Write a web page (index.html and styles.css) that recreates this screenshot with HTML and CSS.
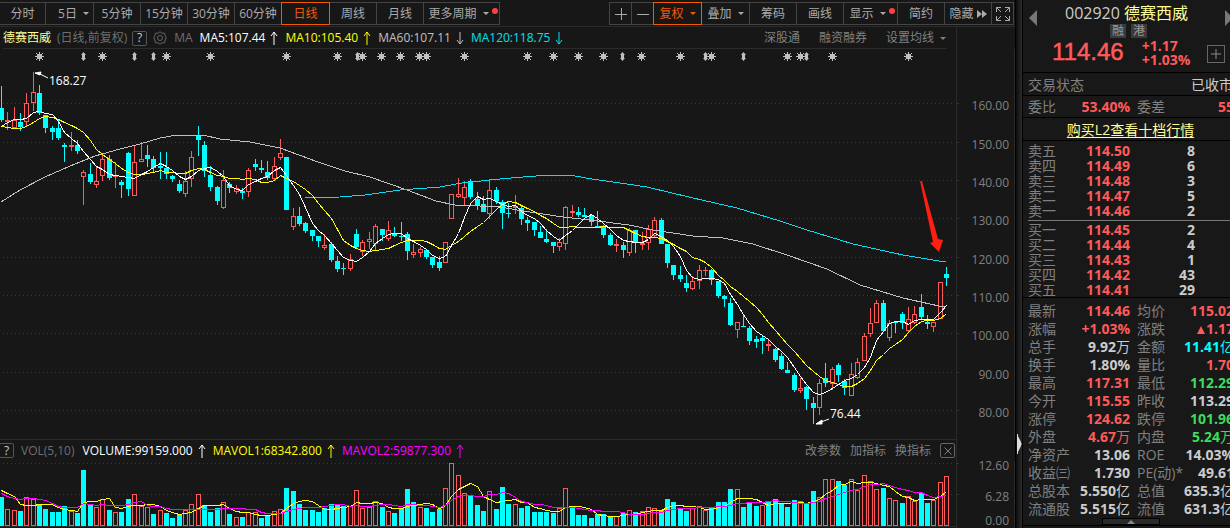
FILE: index.html
```html
<!DOCTYPE html>
<html lang="zh-CN">
<head>
<meta charset="utf-8">
<title>德赛西威 002920</title>
<link rel="stylesheet" href="styles.css">
</head>
<body>
<div class="app">
  <main class="main">
    <nav class="toolbar">
      <div class="group">
        <button class="tab tab-first">分时</button>
        <button class="tab tab-days">5日<i class="caret"></i></button>
        <button class="tab">5分钟</button>
        <button class="tab">15分钟</button>
        <button class="tab">30分钟</button>
        <button class="tab">60分钟</button>
        <button class="tab active">日线</button>
        <button class="tab">周线</button>
        <button class="tab">月线</button>
        <button class="tab tab-more">更多周期<i class="caret"></i><i class="dot"></i></button>
      </div>
      <div class="group group-right">
        <button class="tab tab-icon" aria-label="放大"><svg width="12" height="12"><path d="M0 6.5H12M6.5 0V12"/></svg></button>
        <button class="tab tab-icon" aria-label="缩小"><svg width="12" height="12"><path d="M0 6.5H12"/></svg></button>
        <button class="tab active">复权<i class="caret"></i></button>
        <button class="tab tab-overlay">叠加<i class="caret"></i></button>
        <button class="tab">筹码</button>
        <button class="tab">画线</button>
        <button class="tab tab-show">显示<i class="caret"></i><i class="dot"></i></button>
        <button class="tab">简约</button>
        <button class="tab tab-hide">隐藏<svg width="10" height="8"><path class="solid" d="M0 0L5 4L0 8ZM5 0L10 4L5 8Z"/></svg></button>
        <button class="tab tab-icon" aria-label="全屏"><svg width="14" height="14"><path d="M.5 5V.5H5M.5 .5L5 5M9 .5H13.5V5M13.5 .5L9 5M.5 9V13.5H5M.5 13.5L5 9M9 13.5H13.5V9M13.5 13.5L9 9"/></svg></button>
      </div>
    </nav>

    <div class="info info-top">
      <span class="name">德赛西威</span>
      <span class="dim note">(日线,前复权)</span>
      <button class="help">?</button>
      <svg class="gear" width="14" height="14"><path d="M7 .7L9 2.3L11.6 2.2L12.1 4.9L13.4 7L12.1 9.1L11.6 11.8L9 11.7L7 13.3L5 11.7L2.4 11.8L1.9 9.1L.6 7L1.9 4.9L2.4 2.2L5 2.3Z"/><circle cx="7" cy="7" r="2.5"/></svg>
      <span class="dim label-ma">MA</span>
      <span class="ind white">MA5:107.44<svg width="8" height="14"><path d="M4 1V14M1 5L4 1L7 5"/></svg></span>
      <span class="ind yellow">MA10:105.40<svg width="8" height="14"><path d="M4 1V14M1 5L4 1L7 5"/></svg></span>
      <span class="ind silver">MA60:107.11<svg width="8" height="14"><path d="M4 1V13M1 9L4 13L7 9"/></svg></span>
      <span class="ind aqua">MA120:118.75<svg width="8" height="14"><path d="M4 1V13M1 9L4 13L7 9"/></svg></span>
      <div class="links links-top">
        <button>深股通</button><button>融资融券</button><button>设置均线<i class="caret"></i></button>
      </div>
    </div>

    <svg class="chart" id="price" viewBox="0 49 1015 390" role="img" aria-label="日K线"></svg>

    <div class="info info-vol">
      <button class="help">?</button>
      <span class="dim label-vol">VOL(5,10)</span>
      <span class="ind white">VOLUME:99159.000<svg width="8" height="14"><path d="M4 1V14M1 5L4 1L7 5"/></svg></span>
      <span class="ind yellow">MAVOL1:68342.800<svg width="8" height="14"><path d="M4 1V14M1 5L4 1L7 5"/></svg></span>
      <span class="ind magenta">MAVOL2:59877.300<svg width="8" height="14"><path d="M4 1V14M1 5L4 1L7 5"/></svg></span>
      <div class="links links-vol">
        <button>改参数</button><button>加指标</button><button>换指标</button>
        <button class="close" aria-label="关闭"><svg width="8" height="8"><path d="M.5 .5L7.5 7.5M7.5 .5L.5 7.5"/></svg></button>
      </div>
    </div>

    <svg class="chart" id="volume" viewBox="0 461 1015 67" role="img" aria-label="成交量"></svg>
  </main>

  <div class="splitter"><svg width="5" height="20"><path d="M0 0H1V2L4 8V9L5 10L4 11V12L1 18V20H0Z"/></svg></div>

  <aside class="panel">
    <header class="quote">
      <button class="prev" aria-label="上一只"><svg width="8" height="16"><path d="M8 0V16L0 8Z"/></svg></button>
      <div class="quote-body">
        <h1><span class="code">002920</span> 德赛西威</h1>
        <div class="tags"><span>融</span><span>港</span></div>
        <div class="price-row">
          <span class="price">114.46</span>
          <div class="change"><div>+1.17</div><div>+1.03%</div></div>
        </div>
      </div>
      <div class="quote-side">
        <button class="next" aria-label="下一只"><svg width="8" height="16"><path d="M0 0V16L8 8Z"/></svg></button>
        <button class="add" aria-label="加自选"><svg width="10" height="10"><path d="M0 5H10M5 0V10"/></svg></button>
      </div>
    </header>
    <div class="line state"><span>交易状态</span><span class="closed">已收市</span></div>
    <table class="grid ratio"><tr><th>委比</th><td class="up">53.40%</td><th>委差</th><td class="up">55</td></tr></table>
    <div class="line l2"><a href="#">购买L2查看十档行情</a></div>
    <table class="book">
      <tr><th>卖五</th><td>114.50</td><td>8</td></tr>
      <tr><th>卖四</th><td>114.49</td><td>6</td></tr>
      <tr><th>卖三</th><td>114.48</td><td>3</td></tr>
      <tr><th>卖二</th><td>114.47</td><td>5</td></tr>
      <tr><th>卖一</th><td>114.46</td><td>2</td></tr>
    </table>
    <table class="book bids">
      <tr><th>买一</th><td>114.45</td><td>2</td></tr>
      <tr><th>买二</th><td>114.44</td><td>4</td></tr>
      <tr><th>买三</th><td>114.43</td><td>1</td></tr>
      <tr><th>买四</th><td>114.42</td><td>43</td></tr>
      <tr><th>买五</th><td>114.41</td><td>29</td></tr>
    </table>
    <table class="grid stats">
      <tr><th>最新</th><td class="up">114.46</td><th>均价</th><td class="up">115.02</td></tr>
      <tr><th>涨幅</th><td class="up">+1.03%</td><th>涨跌</th><td class="up"><svg width="8" height="8"><path d="M0 8L4 0L8 8Z"/></svg>1.17</td></tr>
      <tr><th>总手</th><td>9.92<span>万</span></td><th>金额</th><td class="cyan">11.41<span>亿</span></td></tr>
      <tr><th>换手</th><td>1.80%</td><th>量比</th><td class="up">1.70</td></tr>
      <tr><th>最高</th><td class="up">117.31</td><th>最低</th><td class="down">112.29</td></tr>
      <tr><th>今开</th><td class="up">115.55</td><th>昨收</th><td>113.29</td></tr>
      <tr><th>涨停</th><td class="up">124.62</td><th>跌停</th><td class="down">101.96</td></tr>
      <tr><th>外盘</th><td class="up">4.67<span>万</span></td><th>内盘</th><td class="down">5.24<span>万</span></td></tr>
      <tr><th>净资产</th><td>13.06</td><th>ROE</th><td>14.03%</td></tr>
      <tr><th>收益㈢</th><td>1.730</td><th>PE(动)*</th><td>49.61</td></tr>
      <tr><th>总股本</th><td>5.550<span>亿</span></td><th>总值</th><td>635.3<span>亿</span></td></tr>
      <tr><th>流通股</th><td>5.515<span>亿</span></td><th>流值</th><td>631.3<span>亿</span></td></tr>
    </table>
    <div class="foot"><button aria-label="展开"><svg width="8" height="4"><path d="M0 4L4 0L8 4Z"/></svg></button></div>
  </aside>
</div>
<script src="chart.js"></script>
</body>
</html>
```
FILE: chart.js
```js
// Each candle: direction (u/d), high, body top, body bottom, low, volume bar top, optional volume colour.
const data = `d 86 108 120 122 497|u 112 120 122 130 509|u 107 120 128 128 510|d 113 122 127 131 511|u 93 103 122 126 497
u 72 92 103 111 499|d 85 93 113 115 504|d 115 115 128 133 509|d 126 128 132 140 512|d 119 128 138 140 512
d 143 145 147 162 506|u 132 145 147 151 511|d 140 145 151 154 513|u 170 172 177 205 470 d|d 163 174 182 184 505
u 167 181 185 188 507|u 154 159 176 181 499|d 155 159 178 180 510|u 162 176 177 188 512|d 180 182 185 198 512
d 152 153 189 196 499|u 146 162 196 196 494|u 142 159 162 162 506|d 145 155 159 167 507 u|d 156 159 168 172 514
d 152 166 168 179 510 u|d 152 168 174 179 513|d 175 176 179 182 518|d 180 184 191 193 514|u 171 181 194 197 510
u 151 157 179 187 504|d 126 136 140 156 494 u|d 141 145 171 177 505|d 166 175 187 191 512|d 186 187 201 205 508
u 170 180 208 209 502|d 182 184 188 193 514|u 185 188 192 194 517|d 188 191 193 199 517|u 168 170 192 197 512
d 159 164 167 171 512 u|d 160 168 170 173 518|d 161 172 178 180 516|u 157 166 179 180 511|u 139 153 158 160 509
d 157 157 210 210 488|u 208 216 227 230 491 d|d 207 216 224 226 504|d 222 223 231 233 510|d 230 230 236 241 510
d 236 236 241 247 512|u 234 245 248 250 508 d|d 242 244 260 262 504|d 256 261 269 272 504|d 263 268 269 275 506
u 254 259 269 271 506|d 229 234 247 248 490 u|u 240 242 252 256 508|u 232 239 242 249 507|u 224 226 244 250 501
d 229 229 235 241 507|u 221 230 239 241 511|d 227 233 236 237 513|d 222 236 237 241 508|d 232 234 251 260 489
u 244 252 255 258 502 d|u 247 249 253 257 507|d 250 250 257 259 508|d 257 257 265 268 512|d 256 262 268 271 509
u 242 242 263 263 488|u 194 194 219 219 463|u 178 194 197 198 475|u 181 187 198 205 493|d 179 181 197 199 495
d 192 199 206 210 505|d 196 204 212 212 511|u 179 190 214 219 491|d 187 190 201 204 509|d 200 202 213 229 487
d 203 213 214 218 504|u 195 206 208 214 504|d 206 208 219 225 508|d 217 220 223 231 506|d 222 222 230 236 512
d 226 232 238 238 512|d 229 239 242 243 512|d 242 242 246 253 513|u 238 242 247 251 508|u 206 207 244 250 488
u 205 211 213 217 508 d|d 207 212 215 217 515|d 208 215 217 217 515|d 214 215 222 226 518|d 211 226 227 227 514
d 225 227 235 238 514|d 233 235 245 246 517|u 239 244 246 252 516|d 242 245 250 258 513|u 228 230 253 256 510
d 230 230 243 253 512|u 232 243 245 250 511|u 225 229 243 250 507|u 217 220 236 238 508|d 218 220 244 244 510
d 244 244 263 268 499|d 265 265 275 280 502|d 266 275 279 282 508|d 275 283 288 292 511|u 276 281 289 290 508
u 265 270 281 289 506|u 267 270 271 276 510|d 269 270 280 285 508|d 281 281 296 298 502|d 295 296 299 307 502
d 298 303 325 326 489|u 322 322 330 338 489|d 315 326 327 327 507|d 326 328 341 345 503|d 336 339 342 348 506
d 335 338 341 354 505 u|u 340 344 346 351 502 d|d 348 349 360 362 499|d 353 356 369 370 504|d 362 370 373 373 507
d 373 375 390 392 500|u 378 388 391 393 501|d 386 387 399 410 504|d 397 403 408 424 491|u 379 383 408 415 497
d 363 378 383 387 479 u|u 367 369 384 390 479|d 363 365 375 382 481|d 379 381 388 395 485|u 363 374 396 396 479
u 358 362 378 379 490|u 333 336 361 361 475|u 308 323 334 337 481|u 300 303 323 323 489|d 300 303 331 331 488
u 320 323 338 341 498|d 321 322 323 333 500 u|d 312 314 323 329 503|u 307 319 331 333 496|u 306 314 323 324 501
d 294 307 317 319 493|d 315 322 324 329 503|u 322 322 327 332 500|u 282 282 319 319 482|d 267 274 278 286 476 u`
  .split(/[|\n]/).map(r => {
    const [dir, high, top, bottom, low, vol, volDir] = r.trim().split(" ");
    return { dir, high: +high, top: +top, bottom: +bottom, low: +low, vol: +vol, volDir: volDir || dir };
  });

const STEP = 6.342, BASE = 526;
const xAt = i => Math.floor(1.5 + i * STEP);

const line = (cls, pts) => `<polyline class="${cls}" points="${pts.map(p => p.join()).join(" ")}"/>`;
const text = (cls, x, y, s) => `<text class="${cls}" x="${x}" y="${y}">${s}</text>`;

// Moving average, preceded by the values that depend on days before the first candle.
function average(values, n, lead) {
  return values.map((v, i) => {
    const y = i < lead.length ? lead[i] : values.slice(i - n + 1, i + 1).reduce((a, b) => a + b) / n;
    return [xAt(i) + 0.5, Math.round(y) + 0.5];
  });
}

const gridRow = y => `<path class="dots" d="M3 ${y}.5H954"/><path class="tick" d="M956 ${y}.5H959"/>`;

function candle(c, i) {
  const x = xAt(i), h = c.bottom - c.top;
  const wick = `M${x + 0.5} ${c.high}V${c.top}M${x + 0.5} ${c.bottom}V${c.low}`;
  const body = c.dir === "u" && h > 2
    ? `<rect class="hollow" x="${x - 1.5}" y="${c.top + 0.5}" width="4" height="${h - 1}"/>`
    : `<rect class="fill" x="${x - 2}" y="${c.top}" width="5" height="${h}"/>`;
  return `<g class="${c.dir}"><path d="${wick}"/>${body}</g>`;
}

function bar(c, i) {
  const x = xAt(i), h = BASE - c.vol;
  return `<g class="${c.volDir}">` + (c.volDir === "u"
    ? `<rect class="hollow" x="${x - 1.5}" y="${c.vol + 0.5}" width="4" height="${h - 1}"/>`
    : `<rect class="fill" x="${x - 2}" y="${c.vol}" width="5" height="${h}"/>`) + "</g>";
}

const star = x => `<path class="mark" d="M${x - 2} 54h5v5h-5z"/><path class="ray" d="M${x + 0.5} 52V61M${x - 4} 56.5H${x + 5}M${x - 3} 53L${x + 4} 60M${x + 4} 53L${x - 3} 60"/>`;
const updown = x => `<path class="mark" d="M${x + 0.5} 52L${x + 3} 55H${x + 2}V58H${x + 3}L${x + 0.5} 61L${x - 2} 58H${x - 1}V55H${x - 2}Z"/>`;

const stars = [39, 102, 166, 210, 286, 337, 362, 381, 400, 419, 426, 464, 527, 553, 578, 603, 641, 680, 711, 787, 800, 832, 908];
const arrows = [83, 134, 153, 357, 622, 705, 743, 806];

const ma60 = [[1,202],[20,190],[45,177],[70,166],[95,156],[120,149],[140,144],[160,138],[177,135],[203,135],[220,139],[250,142],[280,148],[318,162],[345,171],[370,177],[407,190],[436,201],[455,205],[480,206],[500,207],[523,211],[563,217],[590,220],[629,225],[653,230],[693,236],[723,238],[753,244],[787,255],[827,269],[860,285],[903,298],[939,306],[946,307]];
const ma120 = [[305,198],[340,197],[365,195],[400,190],[440,187],[462,183],[500,179],[523,177],[550,175],[575,176],[592,179],[620,183],[647,187],[693,198],[737,208],[780,221],[807,230],[853,244],[903,255],[939,261],[946,261]];

const closes = data.map(c => c.dir === "u" ? c.top : c.bottom);
const vols = data.map(c => c.vol);
const rows = [[103,160],[142,150],[180,140],[218,130],[257,120],[295,110],[333,100],[372,90],[410,80]];

document.getElementById("price").innerHTML =
  `<path class="frame" d="M956.5 49V439M1014.5 49V439"/>` +
  rows.map(([y, v]) => gridRow(y) + text("axis", 1009, y + 7, v.toFixed(2))).join("") +
  stars.map(star).join("") + arrows.map(updown).join("") +
  data.map(candle).join("") +
  line("avg silver", ma60) + line("avg aqua", ma120) +
  line("avg yellow", average(closes, 10, [126, 127, 128, 128, 126, 122, 118, 116, 117])) +
  line("avg white", average(closes, 5, [126, 122, 119, 119])) +
  `<path class="pointer" d="M35 73L41 72L40 75ZM40 74L48 78M816 424L822 420L822 424ZM821 422L829 419"/>` +
  text("callout", 49, 85, "168.27") + text("callout", 830, 418, "76.44") +
  `<path class="arrow" d="M920 181H922L938 239L943 240L939 252L930 243L933 242Z"/>`;

document.getElementById("volume").innerHTML =
  `<path class="frame" d="M956.5 461V528M1014.5 461V528M0 526.5H957"/>` +
  gridRow(463) + gridRow(494) +
  text("axis", 1009, 470, "12.60") + text("axis", 1009, 501, "6.28") + text("axis", 1009, 525, "0.00") +
  data.map(bar).join("") +
  line("avg yellow", average(vols, 5, [490, 493, 496, 504])) +
  line("avg magenta", average(vols, 10, [493, 496, 498, 499, 498, 498, 499, 500, 503]));
```
FILE: styles.css
```css
* { box-sizing: border-box; }
body {
  margin: 0;
  background: #0c0c0c;
  color: #999;
  font: 12px/16px "Open Sans", "Noto Sans CJK SC", sans-serif;
  overflow: hidden;
}
button {
  padding: 0;
  border: 0;
  background: none;
  color: inherit;
  font: inherit;
  white-space: nowrap;
}
svg { fill: none; stroke: currentColor; flex: none; }
i { font-style: normal; }

.app { display: flex; min-height: 100vh; overflow: hidden; }
.main { flex: 1; min-width: 0; background: #171717; }

.toolbar {
  display: flex;
  justify-content: space-between;
  height: 27px;
  padding: 2px 1px 0 0;
  border-bottom: 1px solid #2a2a2a;
}
.group { display: flex; height: 23px; }
.tab {
  display: flex;
  align-items: center;
  justify-content: center;
  width: 47px;
  border: 1px solid #444;
  border-left: 0;
  color: #aaa;
}
.tab-first { width: 46px; }
.tab-days { width: 48px; padding-left: 8px; }
.tab-overlay { width: 48px; }
.tab-more { width: 76px; }
.tab-icon { width: 22px; }
.tab-show { width: 54px; }
.group-right { border-left: 1px solid #444; }
.tab.active { width: 49px; margin-left: -1px; border: 1px solid #f25a05; color: #f25a05; }
.caret {
  margin-left: 6px;
  border: 3px solid transparent;
  border-top-color: currentColor;
  border-bottom: 0;
}
.dot { width: 6px; height: 6px; margin: -6px -3px 0 3px; border-radius: 3px; background: #ff4040; }
.tab-hide svg { margin-left: 3px; }
.solid { fill: currentColor; stroke: none; }

.info { display: flex; align-items: center; height: 22px; margin-right: 58px; border-right: 1px solid #2a2a2a; white-space: nowrap; }
.info-top { padding: 0 10px 0 3px; background: linear-gradient(#2a2a2a, #2a2a2a) 3px 100% / calc(100% - 12px) 1px no-repeat; }
.info-vol { padding-right: 1px; border-top: 1px solid #2a2a2a; }
.name { color: #ffff99; }
.note { margin-left: 6px; }
.dim { color: #6f6f6f; }
.help {
  width: 15px;
  height: 15px;
  margin-left: 5px;
  border: 1px solid #555;
  border-radius: 2px;
  color: #ccc;
  line-height: 12px;
}
.info-vol .help { margin-left: -1px; }
.gear { margin-left: 6px; color: #666; }
.label-ma { margin: 0 7px; }
.label-vol { margin: 0 8px 0 7px; }
.ind { display: flex; align-items: center; margin-right: 7px; }
.ind svg { margin-left: 5px; }
.white { color: #fff; }
.yellow { color: #ff0; }
.silver { color: #c0c0c0; }
.aqua { color: #00e0f0; }
.magenta { color: #f0f; }
.links { display: flex; align-items: center; margin-left: auto; color: #808080; }
.links button { display: flex; align-items: center; }
.links-top { gap: 19px; }
.links-vol { gap: 9px; }
.links .close { justify-content: center; width: 15px; height: 15px; border: 1px solid #666; border-radius: 2px; }

.chart { display: block; width: 100%; height: auto; overflow: visible; }
.frame { stroke: #2a2a2a; }
.tick { stroke: #333; }
.dots { stroke: #383838; stroke-dasharray: 1 3; }
.axis { fill: #808080; stroke: none; text-anchor: end; font-size: 12px; }
.callout { fill: #fff; stroke: none; font-size: 12px; }
.u { color: #ff5a5a; }
.d { color: #0ff; }
.fill { fill: currentColor; stroke: none; }
.hollow { fill: #171717; }
.u, .d, .avg { shape-rendering: crispEdges; }
.mark { fill: #c0c0c0; stroke: none; }
.ray { stroke: #c0c0c0; }
.pointer { fill: #fff; stroke: #fff; }
.arrow { fill: #ff1e10; stroke: none; }

.splitter {
  display: flex;
  align-items: flex-end;
  width: 8px;
  padding: 0 0 74px 1px;
  border-right: 1px solid #000;
  border-left: 1px solid #000;
  background: linear-gradient(90deg, #0c0c0c, #2c2c2c);
}
.splitter svg { fill: #ddd; stroke: none; }

.panel { width: 207px; flex: none; overflow: hidden; background: #181818; font-size: 14px; color: #808080; }
.quote { display: flex; height: 73px; padding: 3px 5px 0 6px; border-bottom: 1px solid #000; }
.prev, .next { display: flex; color: #777; height: 16px; margin-top: 7px; }
.prev svg, .next svg { fill: currentColor; stroke: none; }
.quote-body { flex: none; width: 164px; }
h1 { margin: 0 0 0 28px; color: #ffff99; font-size: 16px; font-weight: 400; line-height: 20px; white-space: nowrap; }
.code { color: #ccc; }
.tags { display: flex; gap: 5px; margin: 1px 0 0 73px; }
.tags span { width: 16px; height: 14px; background: #3a3a3a; color: #999; font-size: 12px; line-height: 14px; text-align: center; }
.price-row { display: flex; gap: 18px; margin-left: 15px; color: #ff5a5a; }
.price { font: 24px/28px "Liberation Sans", sans-serif; -webkit-text-stroke: 0.5px #ff5a5a; }
.change { padding-top: 1px; font-size: 14px; font-weight: 700; line-height: 14px; }
.quote-side { display: flex; flex-direction: column; flex: none; width: 28px; margin-left: 6px; }
.next { margin-left: 18px; }
.add { display: flex; align-items: center; justify-content: center; width: 18px; height: 18px; margin-top: 19px; border: 1px solid #666; color: #888; }
.line { display: flex; height: 23px; align-items: center; border-bottom: 1px solid #000; white-space: nowrap; }
.state { width: 210px; padding: 2px 0 0 5px; justify-content: space-between; }
.closed { color: #ccc; }
.l2 { width: 215px; padding-top: 1px; justify-content: center; }
.l2 a { color: #ffff99; text-underline-offset: 2px; }

table { border-spacing: 0; table-layout: fixed; }
th { padding: 0; text-align: left; font-weight: 400; white-space: nowrap; }
td { padding: 0; text-align: right; font-weight: 700; color: #ccc; white-space: nowrap; }
td span { font-weight: 400; }
td svg { margin-right: 1px; fill: currentColor; stroke: none; }
.grid { width: 211px; }
.grid th { width: 48px; padding-left: 5px; }
.grid td { width: 59px; }
.grid th:nth-child(3) { width: 50px; padding-left: 7px; }
.grid td:nth-child(4) { width: 54px; }
.ratio { height: 22px; border-bottom: 1px solid #000; }
.book { width: 202px; margin: 2px 0 0 5px; }
.book th { width: 42px; }
.book tr { height: 15px; line-height: 15px; }
.book td:nth-child(2) { width: 60px; color: #ff5a5a; }
.book td:nth-child(3) { padding-right: 35px; }
.bids { padding-top: 1px; border-top: 1px solid #777; }
.stats { padding-top: 4px; border-top: 1px solid #000; }
.stats tr { height: 18px; line-height: 18px; }
td.up, .up { color: #ff5a5a; }
td.down { color: #3ddc5c; }
td.cyan { color: #0ff; }
.foot { display: flex; justify-content: center; width: 215px; border-bottom: 1px solid #000; }
.foot button { display: flex; align-items: center; justify-content: center; width: 58px; height: 7px; border: 1px solid #000; background: #2a2a2a; color: #888; }
.foot svg { fill: currentColor; stroke: none; }
```
